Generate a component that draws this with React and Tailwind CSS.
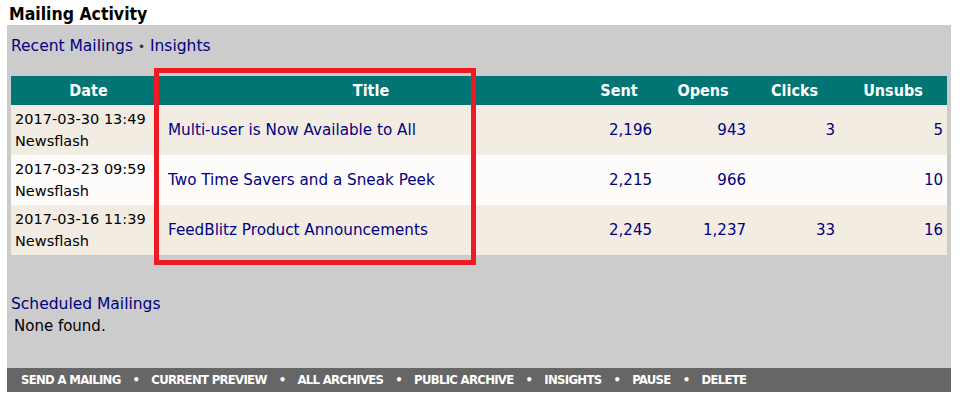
import React from 'react';

const rows = [
    { date: '2017-03-30 13:49', type: 'Newsflash', title: 'Multi-user is Now Available to All', sent: '2,196', opens: '943', clicks: '3', unsubs: '5' },
    { date: '2017-03-23 09:59', type: 'Newsflash', title: 'Two Time Savers and a Sneak Peek', sent: '2,215', opens: '966', clicks: '', unsubs: '10' },
    { date: '2017-03-16 11:39', type: 'Newsflash', title: 'FeedBlitz Product Announcements', sent: '2,245', opens: '1,237', clicks: '33', unsubs: '16' },
];

const actions = ['SEND A MAILING', 'CURRENT PREVIEW', 'ALL ARCHIVES', 'PUBLIC ARCHIVE', 'INSIGHTS', 'PAUSE', 'DELETE'];

export default function App() {
    return (
        <div className="relative w-[960px] h-[401px] bg-white font-['DejaVu_Sans',sans-serif] text-[15px] text-black">
            <h1 className="pl-[9px] pt-[3px] h-[25px] text-[17.5px] font-bold leading-[22px] font-['DejaVu_Sans_Condensed','DejaVu_Sans',sans-serif]">Mailing Activity</h1>

            <div className="ml-[7px] w-[944px] h-[343px] bg-[#cccccc] px-[4px] pt-[10px]">
                <div className="h-[22px] leading-[22px] text-[15.5px] text-[#000080]">
                    Recent Mailings <span className="text-[#333] text-[12px]">•</span> Insights
                </div>

                {/* mailings table */}
                <table className="mt-[19px] w-[936px] border-collapse table-fixed">
                    <colgroup>
                        <col className="w-[149px]" />
                        <col className="w-[422px]" />
                        <col className="w-[74px]" />
                        <col className="w-[94px]" />
                        <col className="w-[89px]" />
                        <col className="w-[108px]" />
                    </colgroup>
                    <thead>
                        <tr className="h-[29px] bg-[#007574] text-white font-bold text-[16px] font-['DejaVu_Sans_Condensed','DejaVu_Sans',sans-serif]">
                            <th className="text-center pl-[6px]">Date</th>
                            <th className="text-center">Title</th>
                            <th className="text-center">Sent</th>
                            <th className="text-center">Opens</th>
                            <th className="text-center">Clicks</th>
                            <th className="text-center">Unsubs</th>
                        </tr>
                    </thead>
                    <tbody className="text-[#000080] text-[15px]">
                        {rows.map((r, i) => (
                            <tr key={i} className={i % 2 === 0 ? 'h-[50px] bg-[#f3ece3]' : 'h-[50px] bg-[#fdfcfa]'}>
                                <td className="pl-[4px] text-black text-[14.5px] leading-[22px] align-middle">
                                    <div>{r.date}</div>
                                    <div>{r.type}</div>
                                </td>
                                <td className="pl-[8px] pt-[1px] text-[15.2px]">{r.title}</td>
                                <td className="text-right pr-[4px]">{r.sent}</td>
                                <td className="text-right pr-[4px]">{r.opens}</td>
                                <td className="text-right pr-[4px]">{r.clicks}</td>
                                <td className="text-right pr-[4px]">{r.unsubs}</td>
                            </tr>
                        ))}
                    </tbody>
                </table>

                <div className="mt-[38px] h-[22px] leading-[22px] text-[15.5px] text-[#000080]">Scheduled Mailings</div>
                <div className="pl-[3px] h-[22px] leading-[22px]">None found.</div>
            </div>

            <div className="ml-[7px] w-[944px] h-[24px] bg-[#666666] flex items-center pl-[14px] text-white font-bold text-[13px] tracking-[-0.7px] font-['DejaVu_Sans_Condensed','DejaVu_Sans',sans-serif]">
                {actions.map((a, i) => (
                    <React.Fragment key={a}>
                        {i > 0 && <span className="px-[12px]">•</span>}
                        <span>{a}</span>
                    </React.Fragment>
                ))}
            </div>

            {/* highlight annotation */}
            <div className="absolute left-[154px] top-[68px] w-[322px] h-[197px] border-[5px] border-[#ed1c24] pointer-events-none" />
        </div>
    );
}
